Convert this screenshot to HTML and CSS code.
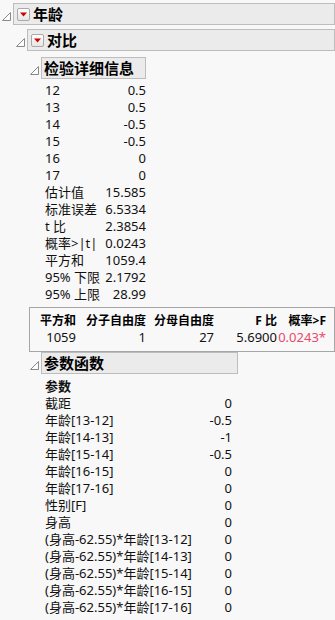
FILE: index.html
```html
<!DOCTYPE html>
<html lang="zh">
<head>
    <meta charset="UTF-8">
    <meta name="viewport" content="width=device-width, initial-scale=1.0">
    <title>年龄 对比</title>
    <link rel="stylesheet" href="styles.css">
</head>
<body>
    <div class="report">
        <div class="outline">
            <div class="outline-head">
                <svg class="disclose" width="9" height="9" viewBox="0 0 9 9"><polygon points="8.5,0.5 8.5,8.5 0.5,8.5" /></svg>
                <div class="title-box full">
                    <span class="menu-btn"><svg width="11" height="11" viewBox="0 0 11 11"><polygon points="2,3.5 9,3.5 5.5,7.5" /></svg></span>
                    <span class="title">年龄</span>
                </div>
            </div>
            <div class="outline-body first">
                <div class="outline">
                    <div class="outline-head">
                        <svg class="disclose" width="9" height="9" viewBox="0 0 9 9"><polygon points="8.5,0.5 8.5,8.5 0.5,8.5" /></svg>
                        <div class="title-box full">
                            <span class="menu-btn"><svg width="11" height="11" viewBox="0 0 11 11"><polygon points="2,3.5 9,3.5 5.5,7.5" /></svg></span>
                            <span class="title">对比</span>
                        </div>
                    </div>
                    <div class="outline-body second">
                        <!-- 检验详细信息 -->
                        <div class="outline">
                            <div class="outline-head">
                                <svg class="disclose" width="9" height="9" viewBox="0 0 9 9"><polygon points="8.5,0.5 8.5,8.5 0.5,8.5" /></svg>
                                <div class="title-box detail-box"><span class="title">检验详细信息</span></div>
                            </div>
                            <div class="outline-body rows">
                                <div class="detail-grid">
                                    <span>12</span><span class="num">0.5</span>
                                    <span>13</span><span class="num">0.5</span>
                                    <span>14</span><span class="num">-0.5</span>
                                    <span>15</span><span class="num">-0.5</span>
                                    <span>16</span><span class="num">0</span>
                                    <span>17</span><span class="num">0</span>
                                    <span>估计值</span><span class="num">15.585</span>
                                    <span>标准误差</span><span class="num">6.5334</span>
                                    <span>t 比</span><span class="num">2.3854</span>
                                    <span>概率&gt;|t|</span><span class="num">0.0243</span>
                                    <span>平方和</span><span class="num">1059.4</span>
                                    <span>95% 下限</span><span class="num">2.1792</span>
                                    <span>95% 上限</span><span class="num">28.99</span>
                                </div>
                            </div>
                        </div>

                        <div class="test-box">
                            <table class="test-table">
                                <tr>
                                    <th class="c1">平方和</th>
                                    <th class="c2">分子自由度</th>
                                    <th class="c3">分母自由度</th>
                                    <th class="c4">F 比</th>
                                    <th class="c5">概率&gt;F</th>
                                </tr>
                                <tr>
                                    <td>1059</td>
                                    <td>1</td>
                                    <td>27</td>
                                    <td>5.6900</td>
                                    <td class="signif">0.0243*</td>
                                </tr>
                            </table>
                        </div>

                        <!-- 参数函数 -->
                        <div class="outline">
                            <div class="outline-head">
                                <svg class="disclose" width="9" height="9" viewBox="0 0 9 9"><polygon points="8.5,0.5 8.5,8.5 0.5,8.5" /></svg>
                                <div class="title-box param-box"><span class="title">参数函数</span></div>
                            </div>
                            <div class="outline-body rows params">
                                <div class="param-grid">
                                    <span class="col-head">参数</span><span></span>
                                    <span>截距</span><span class="num">0</span>
                                    <span>年龄[13-12]</span><span class="num">-0.5</span>
                                    <span>年龄[14-13]</span><span class="num">-1</span>
                                    <span>年龄[15-14]</span><span class="num">-0.5</span>
                                    <span>年龄[16-15]</span><span class="num">0</span>
                                    <span>年龄[17-16]</span><span class="num">0</span>
                                    <span>性别[F]</span><span class="num">0</span>
                                    <span>身高</span><span class="num">0</span>
                                    <span>(身高-62.55)*年龄[13-12]</span><span class="num">0</span>
                                    <span>(身高-62.55)*年龄[14-13]</span><span class="num">0</span>
                                    <span>(身高-62.55)*年龄[15-14]</span><span class="num">0</span>
                                    <span>(身高-62.55)*年龄[16-15]</span><span class="num">0</span>
                                    <span>(身高-62.55)*年龄[17-16]</span><span class="num">0</span>
                                </div>
                            </div>
                        </div>
                    </div>
                </div>
            </div>
        </div>
    </div>
</body>
</html>
```

FILE: styles.css
```css
body {
    margin: 0;
    background-color: #f8f8f8;
    color: #111;
    font-family: "Noto Sans", "Noto Sans CJK SC", sans-serif;
    font-size: 13px;
    overflow: hidden;
}
.report {
    padding-top: 3px;
}
.outline-head {
    display: flex;
    align-items: flex-end;
    height: 22px;
}
.disclose {
    flex: none;
    margin: 0 2px 4px 2px;
}
.disclose polygon {
    fill: #fdfdfd;
    stroke: #8a8a8a;
    stroke-width: 1;
}
.title-box {
    box-sizing: border-box;
    height: 22px;
    display: flex;
    align-items: center;
    background-color: #ebebeb;
    border: 1px solid #bdbdbd;
    padding-left: 3px;
}
.title-box.full {
    flex: 1;
}
.detail-box {
    width: 105px;
    padding-left: 2px;
}
.param-box {
    width: 197px;
    padding-left: 2px;
}
.menu-btn {
    box-sizing: border-box;
    width: 13px;
    height: 13px;
    display: flex;
    align-items: center;
    justify-content: center;
    border: 1px solid #a9a9a9;
    border-radius: 2px;
    background: linear-gradient(#fefefe, #e6e6e6);
    margin-right: 3px;
}
.menu-btn polygon {
    fill: #d30000;
}
.title {
    font-weight: bold;
    font-size: 15px;
    line-height: 20px;
    color: #000;
}
.outline-body {
    padding-left: 14px;
}
.outline-body.first {
    padding-top: 4px;
}
.outline-body.second {
    padding-top: 6px;
}
.outline-body.rows {
    padding-left: 17px;
    padding-top: 3px;
}
.outline-body.params {
    padding-top: 4px;
}
.detail-grid {
    display: grid;
    grid-template-columns: 58px 43px;
    line-height: 17px;
}
.param-grid {
    display: grid;
    grid-template-columns: 150px 37px;
    line-height: 17px;
}
.num {
    text-align: right;
}
.col-head {
    font-weight: bold;
}
.test-box {
    margin: 4px 0 0 1px;
    border: 1px solid #a6a6a6;
    padding: 5px 0 6px 0;
}
.test-table {
    border-collapse: collapse;
    line-height: 16px;
}
.test-table th,
.test-table td {
    padding: 0;
    text-align: right;
    white-space: nowrap;
}
.test-table th {
    font-weight: bold;
    font-size: 12px;
    color: #000;
}
.c1 { width: 46px; }
.c2 { width: 70px; }
.c3 { width: 68px; }
.c4 { width: 63px; }
.c5 { width: 49px; }
.signif {
    color: #e84a6c;
}
```
